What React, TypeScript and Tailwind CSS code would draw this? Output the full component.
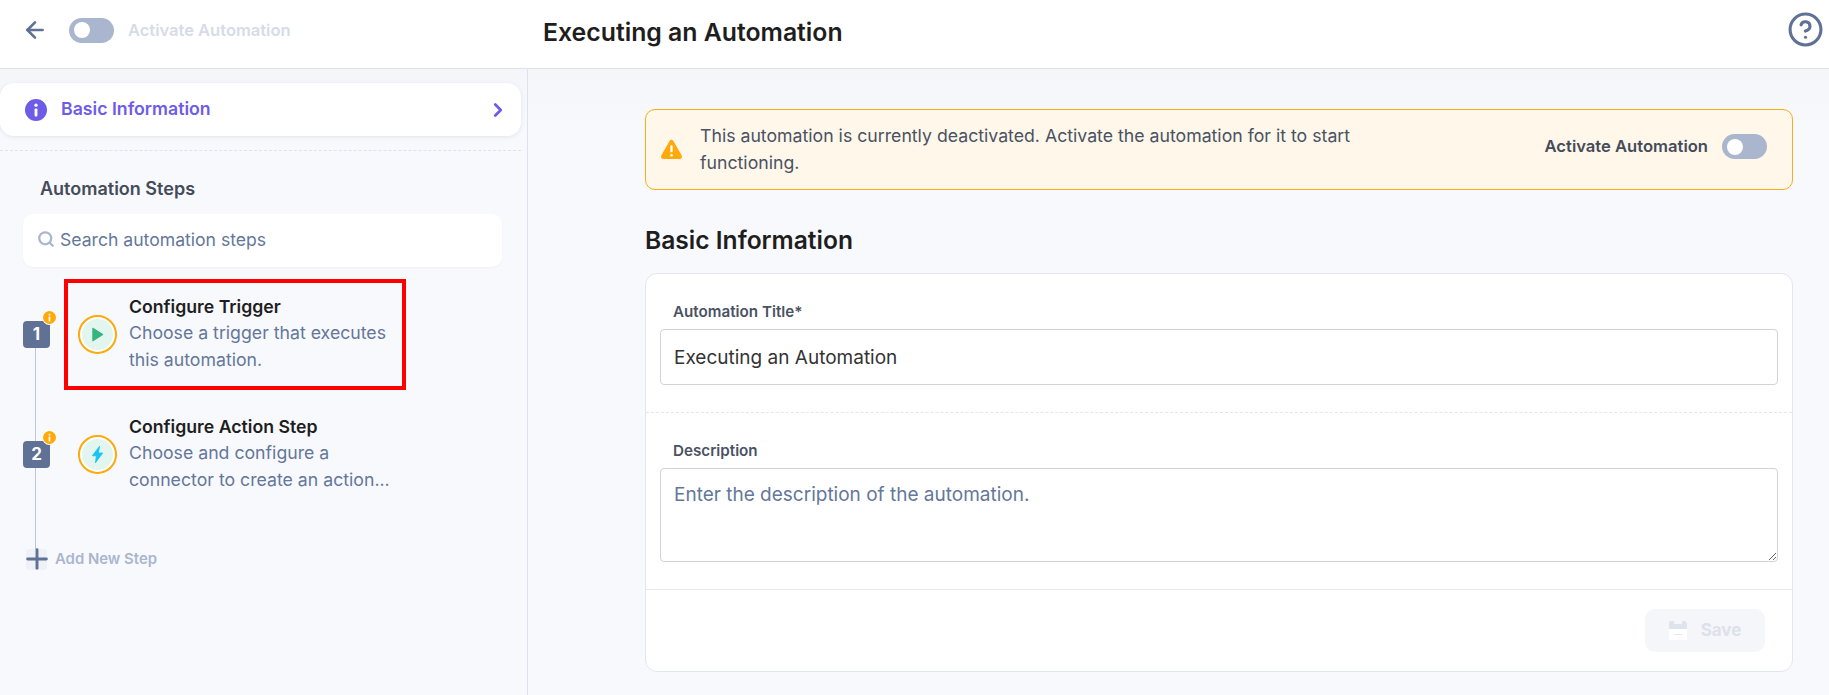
import { ArrowLeft, ChevronRight, CircleHelp, Search, Plus } from "lucide-react";

const Toggle = () => (
  <div className="w-[45px] h-[25px] rounded-full bg-[#a9b6cd] flex items-center pl-[5px] shrink-0">
    <div className="w-4 h-4 rounded-full bg-white" />
  </div>
);

const InfoFilled = ({ className, color }: { className: string; color: string }) => (
  <svg viewBox="0 0 20 20" className={className}>
    <circle cx="10" cy="10" r="10" fill={color} />
    <circle cx="10" cy="5.6" r="1.5" fill="#fff" />
    <rect x="8.7" y="8.6" width="2.6" height="7.4" rx="1" fill="#fff" />
  </svg>
);

const steps = [
  {
    n: 1,
    title: "Configure Trigger",
    desc: ["Choose a trigger that executes", "this automation."],
    active: true,
    icon: <path d="M7.5 6v12l9.5-6z" fill="#36b37e" stroke="#36b37e" strokeWidth="1" strokeLinejoin="round" />,
  },
  {
    n: 2,
    title: "Configure Action Step",
    desc: ["Choose and configure a", "connector to create an action..."],
    active: false,
    icon: <path d="M14 4 7 13.2h4L10 20l7-9.4h-4.2z" fill="#17c3f2" stroke="#17c3f2" strokeWidth="0.8" strokeLinejoin="round" />,
  },
];

const StepRow = ({ step }: { step: (typeof steps)[number] }) => (
  <div className="flex items-center relative">
    <div className="relative z-10 w-[27px] h-[27px] ml-[23px] rounded-[4px] bg-[#5f7194] text-white text-[17px] font-bold flex items-center justify-center shrink-0">
      {step.n}
      <span className="absolute -top-[11px] -right-[7px] w-[15px] h-[15px] rounded-full bg-white flex items-center justify-center">
        <InfoFilled className="w-[13px] h-[13px]" color="#ffa90a" />
      </span>
    </div>
    <div
      className={
        "ml-[14px] w-[342px] h-[111px] pl-[10px] flex items-center border-[4px] " +
        (step.active ? "border-[#ff0000]" : "border-transparent")
      }
    >
      <div className="w-[39px] h-[39px] rounded-full border-2 border-[#ffa90a] bg-white p-[2px] shrink-0">
        <svg viewBox="0 0 30 30" className="w-full h-full rounded-full bg-[#e2f5ee]">
          <g transform="translate(3 3)">{step.icon}</g>
        </svg>
      </div>
      <div className="ml-[12px] pb-[1px]">
        <div className="text-[17.7px] leading-[24px] font-semibold text-[#1e1e1e] whitespace-nowrap">{step.title}</div>
        {step.desc.map((line) => (
          <div key={line} className="text-[17.7px] leading-[27px] text-[#64779a] whitespace-nowrap">
            {line}
          </div>
        ))}
      </div>
    </div>
  </div>
);

export default function App() {
  return (
    <div className="h-[695px] w-[1829px] overflow-hidden flex flex-col bg-[#f8f9fd] font-['Inter',sans-serif]">
      {/* Header */}
      <header className="h-[69px] shrink-0 bg-white border-b border-[#e0e2e6] flex items-center relative">
        <div className="w-[543px] shrink-0 flex items-center pl-[22px] pb-[8px]">
          <ArrowLeft className="w-[26px] h-[26px] text-[#5f7194]" strokeWidth={2.4} />
          <div className="ml-[21px]">
            <Toggle />
          </div>
          <span className="ml-[14px] text-[16.5px] font-semibold text-[#d5dce8] whitespace-nowrap">Activate Automation</span>
        </div>
        <h1 className="text-[24.8px] font-semibold text-[#1e1e1e] pb-[2px]">Executing an Automation</h1>
        <CircleHelp className="ml-auto mr-[5px] mb-[10px] w-[37px] h-[37px] text-[#5f7194]" strokeWidth={2} />
      </header>

      <div className="flex flex-1 min-h-0 bg-linear-to-b from-[#f4f6fa] to-[#f8f9fd] to-[60px]">
        {/* Sidebar */}
        <aside className="w-[528px] shrink-0 border-r border-[#dde3ee] pr-[6px] pt-[14px]">
          <div className="h-[53px] bg-white rounded-[14px] shadow-[0_1px_4px_rgba(90,110,150,0.15)] flex items-center pl-[25px] pr-[12px]">
            <InfoFilled className="w-[22px] h-[22px]" color="#6c5ce7" />
            <span className="ml-[14px] text-[17.7px] font-semibold text-[#6c5ce7]">Basic Information</span>
            <ChevronRight className="ml-auto w-[22px] h-[22px] text-[#6c5ce7]" strokeWidth={3} />
          </div>
          <div className="mt-[14px] border-t border-dashed border-[#dde3ee]" />
          <div className="mt-[27px] pl-[40px] text-[18px] leading-[22px] font-semibold text-[#444b59]">Automation Steps</div>
          <div className="ml-[23px] mr-[19px] mt-[14px] h-[53px] bg-white rounded-[10px] flex items-center pl-[14px] pb-[1px] shadow-[0_1px_2px_rgba(90,110,150,0.06)]">
            <Search className="w-[18px] h-[18px] text-[#a9b6cd] mb-[2px]" strokeWidth={3} />
            <span className="ml-[5px] text-[17.6px] text-[#64779a]">Search automation steps</span>
          </div>
          <div className="relative mt-[12px]">
            <div className="absolute left-[35px] top-[60px] w-px h-[222px] bg-[#bcc7da]" />
            <StepRow step={steps[0]} />
            <div className="mt-[9px]">
              <StepRow step={steps[1]} />
            </div>
            <div className="relative mt-[38px] ml-[26px] flex items-center">
              <div className="w-[21px] h-[21px] rounded-[3px] bg-[#eef1f7] flex items-center justify-center">
                <Plus className="w-[32px] h-[32px] text-[#5f7194] shrink-0" strokeWidth={2.2} />
              </div>
              <span className="ml-[8px] text-[14.9px] font-semibold text-[#aab6cd]">Add New Step</span>
            </div>
          </div>
        </aside>

        {/* Main */}
        <main className="flex-1 pl-[117px] pr-[36px] pt-[40px]">
          <div className="h-[81px] rounded-[10px] border border-[#f9ad1b] bg-[#fff7ea] flex items-center pl-[14px] pr-[25px]">
            <svg viewBox="0 0 24 22" className="w-[23px] h-[21px] shrink-0">
              <path d="M12 3.5 20.5 18.5H3.5z" fill="#ffa90a" stroke="#ffa90a" strokeWidth="5" strokeLinejoin="round" />
              <rect x="10.8" y="6.5" width="2.4" height="7.5" rx="1" fill="#fff" />
              <circle cx="12" cy="17" r="1.4" fill="#fff" />
            </svg>
            <p className="ml-[17px] w-[660px] pb-[2px] text-[17.7px] leading-[27px] text-[#4a5263]">
              This automation is currently deactivated. Activate the automation for it to start functioning.
            </p>
            <div className="ml-auto flex items-center gap-[14px] pb-[6px]">
              <span className="text-[16.6px] font-semibold text-[#444b59] whitespace-nowrap">Activate Automation</span>
              <Toggle />
            </div>
          </div>

          <h2 className="mt-[35px] text-[24.6px] leading-[30px] font-semibold text-[#1e1e1e]">Basic Information</h2>

          <div className="mt-[18px] h-[399px] bg-white rounded-[12px] border border-[#e2e6ef]">
            <div className="px-[14px] pt-[28px] pb-[27px] border-b border-dashed border-[#e2e6ef]">
              <label className="block pl-[13px] mb-[7px] text-[15.2px] leading-[20px] font-semibold text-[#4a5263]">
                Automation Title*
              </label>
              <input
                readOnly
                value="Executing an Automation"
                className="w-full h-[56px] px-[13px] rounded-[4px] border border-[#d0d3d9] text-[19px] text-[#333] outline-none"
              />
            </div>
            <div className="px-[14px] pt-[28px] pb-[27px] border-b border-[#e6e8f0]">
              <label className="block pl-[13px] mb-[7px] text-[15.2px] leading-[20px] font-semibold text-[#4a5263]">
                Description
              </label>
              <textarea
                readOnly
                placeholder="Enter the description of the automation."
                className="block w-full h-[94px] px-[13px] py-[12px] rounded-[4px] border border-[#d0d3d9] text-[19px] placeholder:text-[#64779a] outline-none"
              />
            </div>
            <div className="flex justify-end pt-[19px] pr-[27px]">
              <button className="w-[120px] h-[43px] rounded-[10px] bg-[#f5f6fa] flex items-center justify-center gap-[14px] text-[17px] font-bold text-[#dde1ea]">
                <svg viewBox="0 0 18 19" className="w-[18px] h-[19px]">
                  <path d="M1 0h4v3h8V0h3l2 2v6H0V1z" fill="#dfe3ec" />
                  <rect x="0" y="8" width="18" height="11" rx="1" fill="#fff" />
                  <rect x="5" y="13" width="8" height="1" fill="#e4e8f0" />
                </svg>
                Save
              </button>
            </div>
          </div>
        </main>
      </div>
    </div>
  );
}
